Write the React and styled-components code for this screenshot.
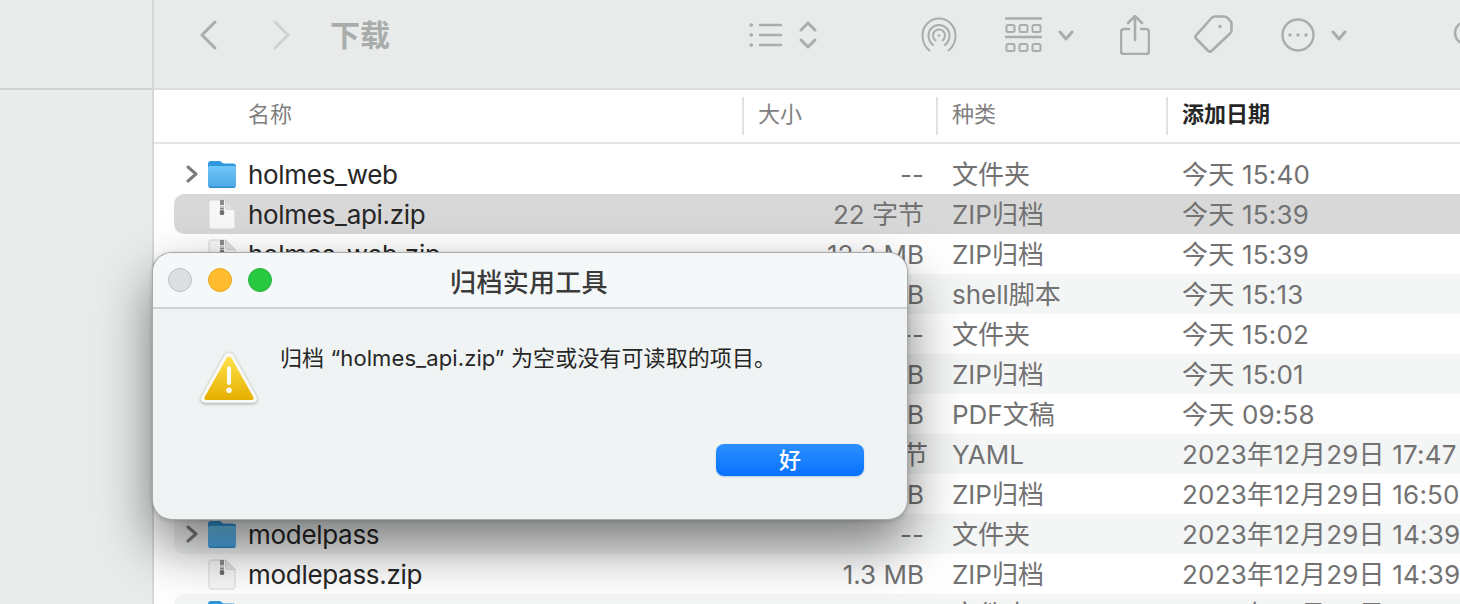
import React from "react";
import styled, { createGlobalStyle } from "styled-components";

const GlobalStyle = createGlobalStyle`
  *{
    margin:0;
    padding:0;
    box-sizing:border-box;
  }
  html, body{
    height:100%;
    overflow:hidden;
    background:#fff;
    font-family:Inter,"Noto Sans CJK SC",sans-serif;
  }
`;

const Page = styled.div`
  position: relative;
  width: 1460px;
  height: 604px;
  display: flex;
  overflow: hidden;
`;

const Sidebar = styled.aside`
  width: 154px;
  flex: none;
  background: #e8ecea;
  border-right: 2px solid #d5d8d7;
`;

const SidebarTop = styled.div`
  height: 90px;
  border-bottom: 2px solid #cfd3d1;
`;

const Main = styled.main`
  flex: 1;
  min-width: 0;
  display: flex;
  flex-direction: column;
`;

const Toolbar = styled.div`
  height: 90px;
  flex: none;
  display: flex;
  align-items: center;
  padding-bottom: 18px;
  background: #e8ebea;
  border-bottom: 2px solid #dcdfde;
  overflow: hidden;
`;

const ToolIcon = styled.svg`
  flex: none;
  margin-left: ${(p) => p.$ml}px;
  fill: none;
  stroke: ${(p) => p.$color || "#a9aeac"};
  stroke-width: ${(p) => p.$sw || 2.4};
  stroke-linecap: round;
  stroke-linejoin: round;
`;

const Title = styled.h1`
  margin-left: 39px;
  width: 60px;
  flex: none;
  font-size: 30px;
  line-height: 36px;
  font-weight: 700;
  color: #a8adab;
`;

const HeaderRow = styled.div`
  height: 54px;
  flex: none;
  display: flex;
  align-items: center;
  padding-left: 94px;
  border-bottom: 2px solid #e4e4e4;
  background: #fff;
`;

const HeaderCell = styled.div`
  width: ${(p) => p.$w}px;
  flex: none;
  height: 38px;
  line-height: 34px;
  padding-left: ${(p) => p.$pl || 0}px;
  border-left: ${(p) => (p.$sep ? "2px solid #e2e2e2" : "none")};
  font-size: 22px;
  font-weight: ${(p) => (p.$active ? 700 : 400)};
  color: ${(p) => (p.$active ? "#262626" : "#7f7f7f")};
`;

const List = styled.div`
  padding: 10px 0 0 20px;
  margin-right: -20px;
  background: #fff;
`;

const Row = styled.div`
  height: 40px;
  display: grid;
  grid-template-columns: 74px 572px 104px 230px 320px;
  align-items: center;
  border-radius: 10px;
  background: ${(p) => (p.$selected ? "#d8d8d8" : p.$striped ? "#f4f5f5" : "transparent")};
  font-size: 26px;
  line-height: 38px;
  white-space: nowrap;
`;

const IconCell = styled.div`
  display: flex;
  align-items: center;
  height: 40px;
  padding-left: 12px;
`;

const Name = styled.div`
  padding-top: 1px;
  color: #262626;
  letter-spacing: -0.3px;
`;

const Size = styled.div`
  padding-top: 2px;
  text-align: right;
  color: #727272;
`;

const Kind = styled.div`
  padding: 2px 0 0 28px;
  color: #727272;
`;

const DateCell = styled.div`
  padding: 2px 0 0 28px;
  letter-spacing: 0.2px;
  color: #727272;
`;

const Disclosure = styled.svg`
  width: 12px;
  height: 18px;
  flex: none;
  fill: none;
  stroke: #7c7c7c;
  stroke-width: 3;
  stroke-linecap: round;
  stroke-linejoin: round;
  visibility: ${(p) => (p.$show ? "visible" : "hidden")};
`;

const FileGlyph = styled.svg`
  width: 32px;
  height: 34px;
  flex: none;
  margin-left: 9px;
`;

const Dialog = styled.div`
  position: absolute;
  left: 152px;
  top: 252px;
  width: 756px;
  height: 268px;
  display: flex;
  flex-direction: column;
  border-radius: 20px;
  background: #f0f3f3;
  border: 1px solid rgba(0, 0, 0, 0.3);
  box-shadow: 0 26px 54px rgba(0, 0, 0, 0.5), 0 1px 4px rgba(0, 0, 0, 0.16);
  overflow: hidden;
`;

const TitleBar = styled.div`
  height: 56px;
  flex: none;
  position: relative;
  display: flex;
  align-items: center;
  justify-content: center;
  padding-right: 2px;
  background: #f4f8f8;
  border-bottom: 2px solid #cfd2d2;
`;

const Lights = styled.div`
  position: absolute;
  left: 15px;
  top: 15px;
  display: flex;
  gap: 16px;
`;

const Light = styled.span`
  width: 24px;
  height: 24px;
  border-radius: 50%;
  background: ${(p) => p.$bg};
  border: 1px solid ${(p) => p.$line};
`;

const DialogTitle = styled.div`
  font-size: 26px;
  font-weight: 500;
  letter-spacing: 0.3px;
  color: #3a3a3a;
`;

const DialogBody = styled.div`
  flex: 1;
  display: flex;
  padding: 36px 0 0 46px;
`;

const Warning = styled.svg`
  width: 60px;
  height: 57px;
  flex: none;
  margin-top: 5px;
  filter: drop-shadow(0 1.500px 1px rgba(0, 0, 0, 0.28));
`;

const Message = styled.p`
  margin-left: 21px;
  font-size: 22px;
  line-height: 26px;
  letter-spacing: 0.1px;
  color: #262626;
  white-space: nowrap;
`;

const DialogFooter = styled.div`
  display: flex;
  justify-content: flex-end;
  padding: 0 43px 43px 0;
`;

const OkButton = styled.button`
  width: 148px;
  height: 32px;
  border: none;
  border-radius: 8px;
  background: linear-gradient(#2c90fe, #0871fe);
  box-shadow: 0 1px 2px rgba(0, 90, 220, 0.25);
  color: #fff;
  font-family: inherit;
  font-size: 22px;
  line-height: 30px;
  font-weight: 500;
`;

const rows = [
  { name: "holmes_web", size: "--", kind: "文件夹", date: "今天 15:40", folder: true },
  { name: "holmes_api.zip", size: "22 字节", kind: "ZIP归档", date: "今天 15:39", selected: true },
  { name: "holmes_web.zip", size: "12.3 MB", kind: "ZIP归档", date: "今天 15:39" },
  { name: "install.sh", size: "4 KB", kind: "shell脚本", date: "今天 15:13", striped: true },
  { name: "dist", size: "--", kind: "文件夹", date: "今天 15:02", folder: true },
  { name: "dist.zip", size: "8.6 MB", kind: "ZIP归档", date: "今天 15:01", striped: true },
  { name: "report.pdf", size: "1.2 MB", kind: "PDF文稿", date: "今天 09:58" },
  { name: "config.yaml", size: "860 字节", kind: "YAML", date: "2023年12月29日 17:47", striped: true },
  { name: "backup.zip", size: "3.4 MB", kind: "ZIP归档", date: "2023年12月29日 16:50" },
  { name: "modelpass", size: "--", kind: "文件夹", date: "2023年12月29日 14:39", folder: true, striped: true },
  { name: "modlepass.zip", size: "1.3 MB", kind: "ZIP归档", date: "2023年12月29日 14:39" },
  { name: "models", size: "--", kind: "文件夹", date: "2023年12月29日 14:30", folder: true, striped: true },
];

function FolderIcon() {
  return (
    <FileGlyph viewBox="1 1 32 34">
      <defs>
        <linearGradient id="folderBody" x1="0" y1="0" x2="0" y2="1">
          <stop offset="0" stopColor="#6fc8f7" />
          <stop offset="1" stopColor="#4aa6e6" />
        </linearGradient>
      </defs>
      <path d="M2 8c0-2 1-3 3-3h8c1.500 0 2 .6 3 1.600.6.600 1.200 1 2 1h9c2 0 3 1 3 3v17c0 2-1 3-3 3H5c-2 0-3-1-3-3z" fill="#2f97dc" />
      <path d="M2 12c0-1.200.8-2 2-2h24c1.200 0 2 .8 2 2v17c0 2-1 3-3 3H5c-2 0-3-1-3-3z" fill="url(#folderBody)" />
      <path d="M2.500 30.500c.6 1 1.400 1.500 2.500 1.500h22c1.100 0 1.900-.5 2.500-1.500z" fill="#2f8fd0" />
    </FileGlyph>
  );
}

function ZipIcon() {
  return (
    <FileGlyph viewBox="0 0 32 34">
      <path d="M2 5c0-1.200.8-2 2-2h14.500L28 12.500V30c0 1.200-.8 2-2 2H4c-1.200 0-2-.8-2-2z" fill="#f7f7f7" stroke="#d6d6d6" />
      <path d="M18.500 3v7.500c0 1.200.8 2 2 2H28z" fill="#e2e2e2" stroke="#d2d2d2" />
      <rect x="13" y="3" width="4" height="5" fill="#8b8b8b" />
      <rect x="13" y="8.500" width="4" height="1.500" fill="#c8c8c8" />
      <rect x="13" y="10.500" width="4" height="2" fill="#8b8b8b" />
      <rect x="12.800" y="13" width="4.400" height="5" rx="1.600" fill="#6f6f6f" />
    </FileGlyph>
  );
}

function App() {
  return (
    <Page>
      <GlobalStyle />
      <Sidebar>
        <SidebarTop />
      </Sidebar>
      <Main>
        <Toolbar>
          <ToolIcon $ml={45} $sw={3} width="18" height="32" viewBox="0 0 18 32">
            <path d="M16 3L3 16l13 13" />
          </ToolIcon>
          <ToolIcon $ml={56} $sw={3} $color="#d0d3d2" width="18" height="32" viewBox="0 0 18 32">
            <path d="M2 3l13 13L2 29" />
          </ToolIcon>
          <Title>下载</Title>
          <ToolIcon $ml={359} width="34" height="26" viewBox="0 0 34 26">
            <path d="M11 3h21M11 13h21M11 23h21" strokeWidth="2.400" />
            <path d="M2 3h.5M2 13h.5M2 23h.5" strokeWidth="3.400" />
          </ToolIcon>
          <ToolIcon $ml={16} $sw={3} width="18" height="30" viewBox="0 0 18 30">
            <path d="M2 10l7-7 7 7M2 20l7 7 7-7" />
          </ToolIcon>
          <ToolIcon $ml={104} $sw={2} width="36" height="36" viewBox="0 0 36 36">
            <path d="M8.500 33.500C4 30 1.500 24.500 1.500 18.500 1.500 9 9 1.500 18 1.500S34.500 9 34.500 18.500c0 6-2.500 11.500-7 15" />
            <path d="M12 28c-2.800-2.300-4.500-5.800-4.500-9.500C7.500 12.700 12.200 8 18 8s10.500 4.700 10.500 10.500c0 3.700-1.700 7.200-4.500 9.500" />
            <path d="M14.500 23.500c-1.500-1.200-2.500-3-2.500-5 0-3.300 2.700-6 6-6s6 2.700 6 6c0 2-1 3.800-2.500 5" />
            <circle cx="18" cy="18.500" r="1.300" fill="#a9aeac" stroke="none" />
          </ToolIcon>
          <ToolIcon $ml={48} $sw={2} width="37" height="36" viewBox="0 0 37 36">
            <path d="M1 1.500h35M1 20h35" strokeWidth="2.600" />
            <rect x="1.500" y="8" width="8" height="7" rx="1.500" />
            <rect x="14.500" y="8" width="8" height="7" rx="1.500" />
            <rect x="27.500" y="8" width="8" height="7" rx="1.500" />
            <rect x="1.500" y="27" width="8" height="7" rx="1.500" />
            <rect x="14.500" y="27" width="8" height="7" rx="1.500" />
            <rect x="27.500" y="27" width="8" height="7" rx="1.500" />
          </ToolIcon>
          <ToolIcon $ml={16} $sw={3} width="16" height="11" viewBox="0 0 16 11">
            <path d="M2 2l6 7 6-7" />
          </ToolIcon>
          <ToolIcon $ml={46} $sw={2.600} width="30" height="40" viewBox="0 0 30 40">
            <path d="M15 25V2M8 8l7-7 7 7" />
            <path d="M9 14H4c-1.800 0-3 1.200-3 3v19c0 1.800 1.200 3 3 3h22c1.800 0 3-1.200 3-3V17c0-1.800-1.200-3-3-3h-5" />
          </ToolIcon>
          <ToolIcon $ml={44} $sw={2.600} width="40" height="40" viewBox="0 0 40 40">
            <path d="M21 1.500h9c1.500 0 2.500.5 3.500 1.500l2.500 2.500c1 1 1.500 2 1.500 3.500v6c0 1.500-.5 2.500-1.500 3.500L18 35.500c-1.200 1.200-3 1.200-4.200 0L2.500 24c-1.200-1.200-1.200-3 0-4.200L17.500 3c1-1 2-1.500 3.500-1.500z" />
            <circle cx="26" cy="11.500" r="1.800" fill="#a9aeac" stroke="none" />
          </ToolIcon>
          <ToolIcon $ml={47} $sw={2.400} width="34" height="34" viewBox="0 0 34 34">
            <circle cx="17" cy="17" r="15.500" />
            <circle cx="9" cy="17" r="1.700" fill="#a9aeac" stroke="none" />
            <circle cx="17" cy="17" r="1.700" fill="#a9aeac" stroke="none" />
            <circle cx="25" cy="17" r="1.700" fill="#a9aeac" stroke="none" />
          </ToolIcon>
          <ToolIcon $ml={16} $sw={3} width="16" height="11" viewBox="0 0 16 11">
            <path d="M2 2l6 7 6-7" />
          </ToolIcon>
          <ToolIcon $ml={106} $sw={2.400} width="30" height="30" viewBox="0 0 30 30">
            <circle cx="13" cy="13" r="11" />
            <path d="M21 21l7 7" />
          </ToolIcon>
        </Toolbar>
        <HeaderRow>
          <HeaderCell $w={494}>名称</HeaderCell>
          <HeaderCell $w={194} $sep $pl={14}>大小</HeaderCell>
          <HeaderCell $w={230} $sep $pl={14}>种类</HeaderCell>
          <HeaderCell $w={200} $sep $pl={14} $active>添加日期</HeaderCell>
        </HeaderRow>
        <List>
          {rows.map((row) => (
            <Row key={row.name} $selected={row.selected} $striped={row.striped}>
              <IconCell>
                <Disclosure $show={row.folder} viewBox="0 0 12 18">
                  <path d="M2 2l8 7-8 7" />
                </Disclosure>
                {row.folder ? <FolderIcon /> : <ZipIcon />}
              </IconCell>
              <Name>{row.name}</Name>
              <Size>{row.size}</Size>
              <Kind>{row.kind}</Kind>
              <DateCell>{row.date}</DateCell>
            </Row>
          ))}
        </List>
      </Main>
      <Dialog>
        <TitleBar>
          <Lights>
            <Light $bg="#dcdfdf" $line="#bcc0c0" />
            <Light $bg="#febc2e" $line="#e8a91f" />
            <Light $bg="#28c840" $line="#22b338" />
          </Lights>
          <DialogTitle>归档实用工具</DialogTitle>
        </TitleBar>
        <DialogBody>
          <Warning viewBox="0 0 64 60">
            <defs>
              <linearGradient id="warnFill" x1="0" y1="0" x2="0" y2="1">
                <stop offset="0" stopColor="#ffe24a" />
                <stop offset="1" stopColor="#e6ae00" />
              </linearGradient>
            </defs>
            <path d="M32 2c2.400 0 4 1.200 5.200 3.400l24 43c2.200 4 .4 7.600-4.200 7.600H7c-4.600 0-6.400-3.600-4.200-7.600l24-43C28 3.200 29.600 2 32 2z" fill="#f9f9f7" stroke="#dcdcd8" />
            <path d="M32 6.500c1.200 0 2 .7 2.800 2l23 41c1.200 2.200.2 3.500-2 3.500H8.200c-2.200 0-3.200-1.300-2-3.500l23-41c.8-1.300 1.600-2 2.800-2z" fill="url(#warnFill)" />
            <rect x="29.800" y="17" width="4.400" height="20" rx="2.200" fill="#fbfaf2" />
            <circle cx="32" cy="42.500" r="3" fill="#fbfaf2" />
          </Warning>
          <Message>归档 “holmes_api.zip” 为空或没有可读取的项目。</Message>
        </DialogBody>
        <DialogFooter>
          <OkButton>好</OkButton>
        </DialogFooter>
      </Dialog>
    </Page>
  );
}

export default App;
